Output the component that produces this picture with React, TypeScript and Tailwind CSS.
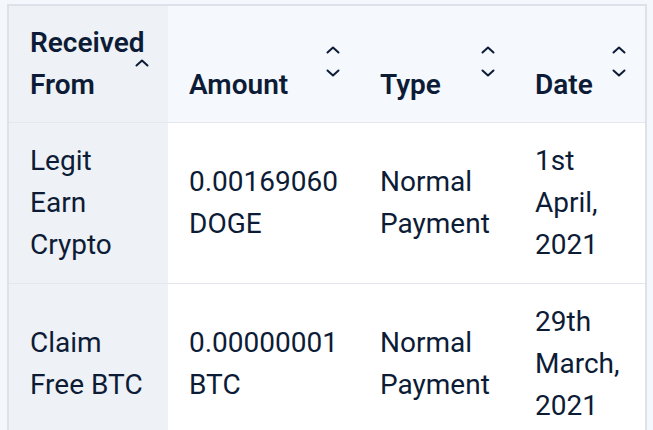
import React from "react";

const ChevronUp = () => (
  <svg width="14" height="8" viewBox="0 0 14 8" fill="none" stroke="#0d1c36" strokeWidth="2" strokeLinecap="round" strokeLinejoin="round">
    <path d="M1.5 6.5 L7 1.5 L12.5 6.5" />
  </svg>
);

const ChevronDown = () => (
  <svg width="14" height="8" viewBox="0 0 14 8" fill="none" stroke="#0d1c36" strokeWidth="2" strokeLinecap="round" strokeLinejoin="round">
    <path d="M1.5 1.5 L7 6.5 L12.5 1.5" />
  </svg>
);

function SortIcon({ asc }: { asc?: boolean }) {
  if (asc) {
    return (
      <span className="absolute right-[19px] top-[53px] flex">
        <ChevronUp />
      </span>
    );
  }
  return (
    <span className="absolute right-[19px] top-[40px] flex flex-col gap-[15px]">
      <ChevronUp />
      <ChevronDown />
    </span>
  );
}

const rows = [
  { from: ["Legit", "Earn", "Crypto"], amount: ["0.00169060", "DOGE"], type: ["Normal", "Payment"], date: ["1st", "April,", "2021"] },
  { from: ["Claim", "Free BTC"], amount: ["0.00000001", "BTC"], type: ["Normal", "Payment"], date: ["29th", "March,", "2021"] },
];

function Lines({ items }: { items: string[] }) {
  return (
    <>
      {items.map((t, i) => (
        <div key={i}>{t}</div>
      ))}
    </>
  );
}

export default function App() {
  return (
    <div className="min-h-[430px] w-[653px] bg-[#f4f7fb] pl-[7px] pt-[4px] text-[#0d1c36] overflow-hidden" style={{ fontFamily: "Roboto, 'Liberation Sans', sans-serif" }}>
      <table className="border-collapse border-2 border-[#dde2ea] text-[28px] leading-[42px] table-fixed">
        <thead>
          <tr className="border-b border-[#e4e8ee]">
            <th className="relative w-[160px] bg-[#eef1f5] pl-[21px] pr-[8px] py-[16px] text-left align-bottom font-semibold">
              <div>Received</div>
              <div>From</div>
              <SortIcon asc />
            </th>
            <th className="relative w-[191px] bg-[#f5f8fc] pl-[21px] py-[16px] text-left align-bottom font-semibold">
              Amount
              <SortIcon />
            </th>
            <th className="relative w-[155px] bg-[#f5f8fc] pl-[21px] py-[16px] text-left align-bottom font-semibold">
              Type
              <SortIcon />
            </th>
            <th className="relative w-[132px] bg-[#f5f8fc] pl-[21px] py-[16px] text-left align-bottom font-semibold">
              Date
              <SortIcon />
            </th>
          </tr>
        </thead>
        <tbody>
          {rows.map((r, i) => (
            <tr key={i} className="border-b border-[#e4e8ee]">
              <td className="bg-[#eef1f5] pl-[21px] py-[17px] align-middle">
                <Lines items={r.from} />
              </td>
              <td className="bg-white pl-[21px] py-[17px] align-middle">
                <Lines items={r.amount} />
              </td>
              <td className="bg-white pl-[21px] py-[17px] align-middle">
                <Lines items={r.type} />
              </td>
              <td className="bg-white pl-[21px] py-[17px] align-middle">
                <Lines items={r.date} />
              </td>
            </tr>
          ))}
        </tbody>
      </table>
    </div>
  );
}
